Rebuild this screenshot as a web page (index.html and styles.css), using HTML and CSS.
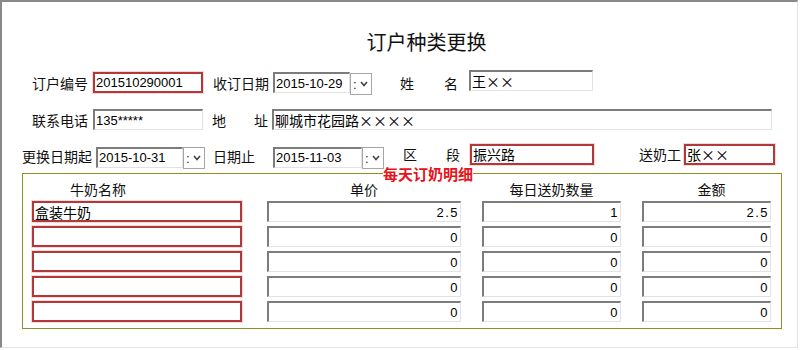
FILE: index.html
```html
<!DOCTYPE html>
<html>
<head>
    <title>订户种类更换</title>
    <link rel="stylesheet" href="styles.css">
</head>
<body>
    <div class="form">
        <h1 class="title">订户种类更换</h1>

        <div class="row row-top">
            <span class="label">订户编号</span>
            <input class="field red w-no ml-5" type="text" value="201510290001" readonly>
            <span class="label ml-10">收订日期</span>
            <input class="field sunken w-date ml-4" type="text" value="2015-10-29" readonly>
            <div class="drop drop-1"><span>:</span><svg width="8" height="6" viewBox="0 0 8 6"><polyline points="1,1 4,4.5 7,1" fill="none" stroke="#444" stroke-width="1.6"/></svg></div>
            <span class="label spread w-58 ml-28"><span>姓</span><span>名</span></span>
            <input class="field sunken w-124 ml-11 up" type="text" value="王××" readonly>
        </div>

        <div class="row row-second">
            <span class="label">联系电话</span>
            <input class="field sunken w-no ml-5" type="text" value="135*****" readonly>
            <span class="label spread w-56 ml-9"><span>地</span><span>址</span></span>
            <input class="field sunken w-addr ml-4" type="text" value="聊城市花园路××××" readonly>
        </div>

        <div class="row row-third">
            <span class="label">更换日期起</span>
            <input class="field sunken w-87 ml-4 down" type="text" value="2015-10-31" readonly>
            <div class="drop drop-3"><span>:</span><svg width="8" height="6" viewBox="0 0 8 6"><polyline points="1,1 4,4.5 7,1" fill="none" stroke="#444" stroke-width="1.6"/></svg></div>
            <span class="label ml-8">日期止</span>
            <input class="field sunken w-89 ml-18 down" type="text" value="2015-11-03" readonly>
            <div class="drop drop-3"><span>:</span><svg width="8" height="6" viewBox="0 0 8 6"><polyline points="1,1 4,4.5 7,1" fill="none" stroke="#444" stroke-width="1.6"/></svg></div>
            <span class="label spread w-57 ml-19 lift"><span>区</span><span>段</span></span>
            <input class="field red w-124 ml-10 up-s" type="text" value="振兴路" readonly>
            <span class="label ml-45 lift">送奶工</span>
            <input class="field red w-91 ml-3 up-s" type="text" value="张××" readonly>
        </div>

        <fieldset class="detail">
            <legend>每天订奶明细</legend>
            <div class="detail-grid">
                <div class="col-head head-name">牛奶名称</div>
                <div class="col-head">单价</div>
                <div class="col-head">每日送奶数量</div>
                <div class="col-head head-sum">金额</div>

                <input class="field red cell-name" type="text" value="盒装牛奶" readonly>
                <input class="field sunken num" type="text" value="2.5" readonly>
                <input class="field sunken num" type="text" value="1" readonly>
                <input class="field sunken num" type="text" value="2.5" readonly>

                <input class="field red cell-name" type="text" value="" readonly>
                <input class="field sunken num" type="text" value="0" readonly>
                <input class="field sunken num" type="text" value="0" readonly>
                <input class="field sunken num" type="text" value="0" readonly>

                <input class="field red cell-name" type="text" value="" readonly>
                <input class="field sunken num" type="text" value="0" readonly>
                <input class="field sunken num" type="text" value="0" readonly>
                <input class="field sunken num" type="text" value="0" readonly>

                <input class="field red cell-name" type="text" value="" readonly>
                <input class="field sunken num" type="text" value="0" readonly>
                <input class="field sunken num" type="text" value="0" readonly>
                <input class="field sunken num" type="text" value="0" readonly>

                <input class="field red cell-name" type="text" value="" readonly>
                <input class="field sunken num" type="text" value="0" readonly>
                <input class="field sunken num" type="text" value="0" readonly>
                <input class="field sunken num" type="text" value="0" readonly>
            </div>
        </fieldset>
    </div>
</body>
</html>
```

FILE: styles.css
```css
/* Base */
* {
    margin: 0;
    padding: 0;
    box-sizing: border-box;
}

body {
    font-family: "Noto Sans CJK SC", "Liberation Sans", sans-serif;
    font-size: 14px;
    color: #111;
    background-color: #fff;
}

/* Window frame */
.form {
    width: 798px;
    height: 348px;
    border-top: 2px solid #8a8a8a;
    border-left: 2px solid #8a8a8a;
    border-right: 1px solid #e4e4e4;
    border-bottom: 1px solid #e4e4e4;
}

.title {
    font-size: 20px;
    font-weight: normal;
    line-height: 24px;
    text-align: center;
    padding: 28px 0 0 54px;
}

/* Rows */
.row {
    display: flex;
    align-items: center;
    height: 23px;
}

.row-top {
    margin-top: 17px;
    padding-left: 30px;
}

.row-second {
    margin-top: 14px;
    padding-left: 30px;
}

.row-third {
    margin-top: 13px;
    padding-left: 20px;
}

.label {
    white-space: nowrap;
    line-height: 16px;
}

.lift {
    margin-bottom: 3px;
}

.spread {
    display: flex;
    justify-content: space-between;
}

/* Inputs */
.field {
    height: 21px;
    font-family: "Noto Sans CJK SC", "Liberation Sans", sans-serif;
    font-size: 14px;
    color: #000;
    background-color: #fff;
    padding: 0 1px;
    outline: none;
}

.field[value^="2"], .field[value^="1"] {
    font-family: "Liberation Sans", sans-serif;
    font-size: 13px;
}

.sunken {
    border-top: 2px solid #7c7c7c;
    border-left: 2px solid #7c7c7c;
    border-right: 1px solid #e2e2e2;
    border-bottom: 1px solid #e2e2e2;
}

.red {
    border: 2px solid #b3383a;
    box-shadow: 0 0 0 1px #f4d8d8;
}

.up { margin-bottom: 4px; }
.down { margin-top: 3px; }
.up-s { margin-bottom: 3px; }

.drop {
    width: 22px;
    height: 22px;
    border: 1px solid #a6a6a6;
    background-color: #fff;
    display: flex;
    align-items: center;
    gap: 3px;
    padding-left: 2px;
    font-family: "Liberation Sans", sans-serif;
    font-size: 13px;
    line-height: 1;
}

.drop-1 { margin-top: 3px; }
.drop-3 { margin-top: 5px; }

/* Widths and gaps */
.w-no { width: 110px; }
.w-date { width: 77px; }
.w-87 { width: 87px; }
.w-89 { width: 89px; }
.w-91 { width: 91px; }
.w-124 { width: 124px; }
.w-addr { width: 500px; }
.w-56 { width: 56px; }
.w-57 { width: 57px; }
.w-58 { width: 58px; }

.ml-3 { margin-left: 3px; }
.ml-4 { margin-left: 4px; }
.ml-5 { margin-left: 5px; }
.ml-8 { margin-left: 8px; }
.ml-9 { margin-left: 9px; }
.ml-10 { margin-left: 10px; }
.ml-11 { margin-left: 11px; }
.ml-18 { margin-left: 18px; }
.ml-19 { margin-left: 19px; }
.ml-28 { margin-left: 28px; }
.ml-45 { margin-left: 45px; }

/* Detail group */
.detail {
    width: 760px;
    margin: -2px 0 0 20px;
    padding: 0 9px 6px 9px;
    border: 1px solid #8f8f22;
}

.detail legend {
    margin-left: 351px;
    padding: 0;
    color: #e8121a;
    font-size: 15px;
    font-weight: bold;
    line-height: 17px;
}

.detail-grid {
    display: grid;
    grid-template-columns: 214px 194px 139px 129px;
    column-gap: 21px;
    row-gap: 4px;
}

.col-head {
    line-height: 15px;
    text-align: center;
}

.head-name {
    text-align: left;
    padding-left: 38px;
}

.head-sum {
    padding-left: 10px;
}

.cell-name {
    width: 210px;
}

.num {
    width: 100%;
    text-align: right;
    font-family: "Liberation Sans", sans-serif;
    font-size: 13px;
    letter-spacing: 1.5px;
    padding-right: 1px;
}
```
